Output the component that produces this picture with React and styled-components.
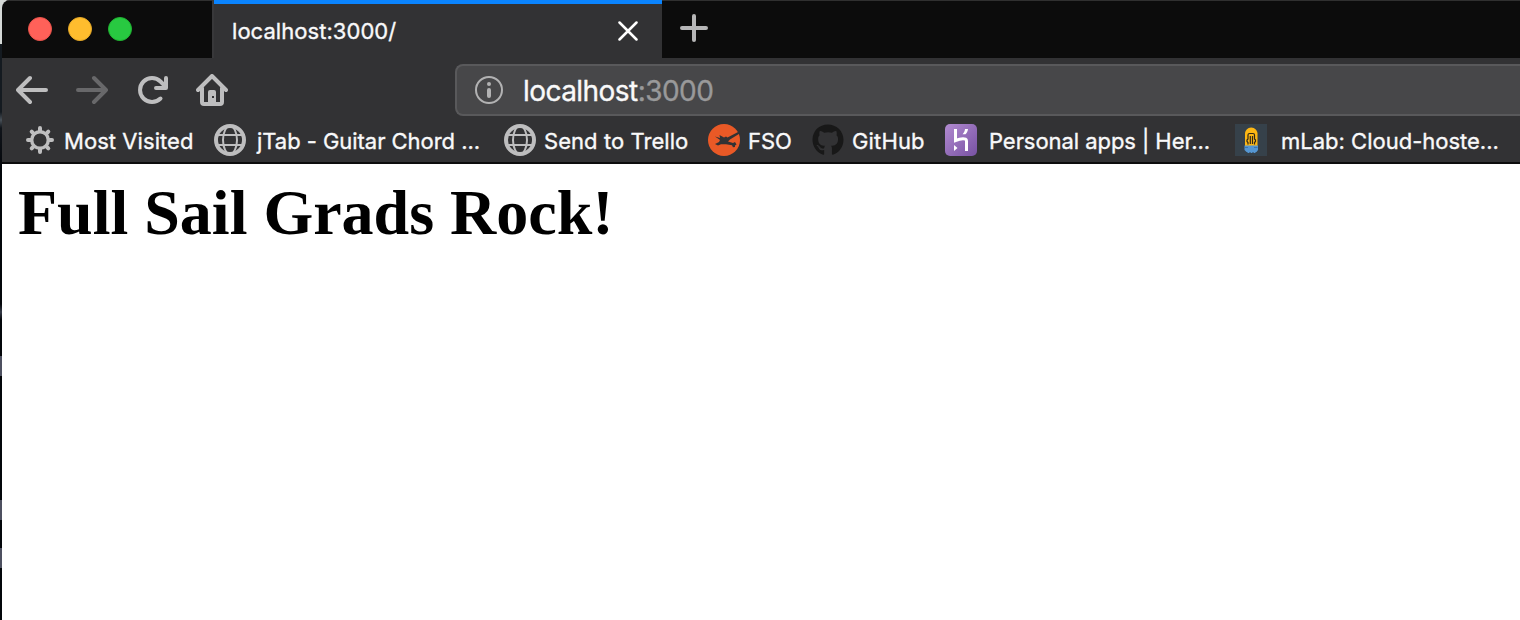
import React from "react";
import styled, { createGlobalStyle } from "styled-components";
import { FaGithub } from "react-icons/fa";

const GlobalStyle = createGlobalStyle`
  * { box-sizing: border-box; }
  body {
    margin: 0;
    overflow: hidden;
    background: #fff;
    font-family: Inter, "Liberation Sans", sans-serif;
  }
`;

const Desktop = styled.div`
  display: flex;
  height: 620px;
  width: 1520px;
  overflow: hidden;
  padding-left: 2px;
  background:
    linear-gradient(#4d5060, #4d5060) 0 356px / 2px 20px no-repeat,
    linear-gradient(#4d5060, #4d5060) 0 500px / 2px 20px no-repeat,
    linear-gradient(#4d5060, #4d5060) 0 548px / 2px 20px no-repeat,
    linear-gradient(#d5d9d7 0 44px, #141a20 44px 112px, #485058 120px, #10141a 128px, #03060a 170px, #03060a 304px, #353b48 312px, #03060a 320px);
`;

const Window = styled.main`
  display: flex;
  flex-direction: column;
  flex: 1;
  min-width: 0;
  border-top-left-radius: 8px;
  background: #fff;
  overflow: hidden;
`;

const TitleBar = styled.header`
  display: flex;
  height: 58px;
  background: #0c0c0c;
  box-shadow: inset 0 1px #303030;
`;

const Lights = styled.div`
  display: flex;
  gap: 16px;
  width: 212px;
  padding: 17px 0 0 26px;
  border-right: 2px solid #38383a;
`;

const Light = styled.span`
  width: 24px;
  height: 24px;
  border-radius: 50%;
  background: ${(p) => p.$fill};
  border: 1px solid ${(p) => p.$edge};
`;

const Tab = styled.div`
  display: flex;
  align-items: center;
  justify-content: space-between;
  width: 448px;
  padding: 0 24px 0 18px;
  border-top: 4px solid #0a84ff;
  background: #323234;
`;

const Label = styled.span`
  display: block;
  width: ${(p) => p.$width}px;
  flex: none;
  white-space: nowrap;
  font-size: ${(p) => p.$size || 22}px;
  line-height: 28px;
  letter-spacing: ${(p) => p.$track || 0}px;
  -webkit-text-stroke: 0.35px currentColor;
  color: #f9f9fa;
`;

const NewTab = styled.div`
  padding: 14px 0 0 18px;
`;

const Icon = styled.svg`
  display: block;
  flex: none;
  fill: none;
  stroke: ${(p) => p.$color || "#bebebf"};
  stroke-linecap: round;
  stroke-linejoin: round;
`;

const NavBar = styled.nav`
  display: flex;
  height: 58px;
  padding: 6px 0 0 14px;
  background: #323234;
`;

const NavButtons = styled.div`
  display: flex;
  gap: 28px;
  width: 439px;
  padding-top: 10px;
`;

const AddressBar = styled.div`
  display: flex;
  flex: 1;
  height: 52px;
  padding: 10px 0 0 18px;
  border: 2px solid #59595b;
  border-right: 0;
  border-radius: 8px 0 0 8px;
  background: #474749;
`;

const Address = styled(Label)`
  margin: 0 0 0 20px;
  line-height: 30px;
`;

const Port = styled.span`
  color: #99999a;
`;

const BookmarkBar = styled.div`
  display: flex;
  height: 48px;
  padding: 8px 0 0 22px;
  border-bottom: 2px solid #0c0c0d;
  background: #323234;
`;

const Bookmark = styled.div`
  display: flex;
  flex: none;
  gap: ${(p) => p.$gap || 8}px;
  width: ${(p) => p.$width}px;
`;

const BookmarkLabel = styled(Label)`
  margin-top: 3px;
`;

const GithubMark = styled(FaGithub)`
  flex: none;
  color: #181818;
`;

const Page = styled.section`
  flex: 1;
  padding: 12px 16px;
`;

const Heading = styled.h1`
  margin: 0;
  font: bold 64px/74px "Liberation Serif", serif;
  color: #000;
`;

const Globe = () => (
  <Icon width="32" height="32" viewBox="0 0 32 32" strokeWidth="2">
    <circle cx="16" cy="16" r="14" strokeWidth="4" />
    <ellipse cx="16" cy="16" rx="7" ry="14" />
    <path d="M4 11h24M4 21h24" />
  </Icon>
);

const Gear = () => (
  <Icon width="32" height="32" viewBox="0 0 32 32">
    <circle cx="16" cy="16" r="8.3" strokeWidth="3.4" />
    <path
      strokeWidth="4"
      d="M16 4v3M16 25v3M4 16h3M25 16h3M7.700 7.700l1.700 1.700M22.600 22.600l1.700 1.700M7.700 24.300l1.700-1.700M22.600 9.400l1.700-1.700"
    />
  </Icon>
);

const Plane = () => (
  <Icon width="32" height="32" viewBox="0 0 32 32" $color="none">
    <circle cx="16" cy="16" r="16" fill="#e95926" />
    <path
      fill="#323234"
      d="M7 12.500L12 14l-.5-3 4.500 2.500 2-1 1.500 1L31 7.500l.7 2L22 15.500 20 17.500l5 1.500 2-1 1.500 2.500-1.500 1 0 1.500-2 .3-1-2-6-1-5 0-3 1.200-3-1.500 4-2 1-2z"
    />
  </Icon>
);

const Heroku = () => (
  <Icon width="32" height="32" viewBox="0 0 32 32" $color="none">
    <defs>
      <linearGradient id="violet" x1="0" y1="0" x2="1" y2="1">
        <stop offset="0" stopColor="#b18ad0" />
        <stop offset="1" stopColor="#7852a3" />
      </linearGradient>
    </defs>
    <rect width="32" height="32" rx="5" fill="url(#violet)" />
    <path
      d="M10.500 5v11.500c5-2 11-3 11 .5v10"
      stroke="#fff"
      strokeWidth="3"
      strokeLinecap="butt"
      strokeLinejoin="miter"
    />
    <path d="M9 21l3.500 3L9 27zM20 5h3c-.2 2-1.200 4-2.500 5.300h-3C19 8.700 19.800 7 20 5z" fill="#fff" />
  </Icon>
);

const Mlab = () => (
  <Icon width="32" height="32" viewBox="0 0 32 32" $color="none">
    <path fill="#36414a" d="M0 0h32v32H0z" />
    <path fill="#fdb714" d="M10 22V9.500C10 7 12.500 3.500 16.200 3.500S22.500 7 22.500 9.500V22z" />
    <path fill="#5596d2" d="M9.500 21.500h13.500v4.500l-1.500 2h-1v1h-2v-1h-1v1h-2v-1h-1v1h-2v-1h-1l-2-2z" />
    <path fill="#3d75ad" d="M10 23h3v1h-3zM19 23h3.500v1H19z" />
    <path
      d="M13 20.500v-2l-1-1v-1.500l1-1v-4q0-1.500 1.500-1.500h3.500q1.500 0 1.500 1.500v4l1 1v1.500l-1 1v2M15.300 12v8M17.500 12v8"
      stroke="#302718"
      strokeWidth="1.200"
      strokeLinecap="butt"
    />
  </Icon>
);

const bookmarks = [
  { icon: <Gear />, text: "Most Visited", width: 190, label: 132, track: 0.06 },
  { icon: <Globe />, text: "jTab - Guitar Chord ...", width: 290, label: 226, gap: 11, track: -0.04 },
  { icon: <Globe />, text: "Send to Trello", width: 204, label: 146, track: 0.06 },
  { icon: <Plane />, text: "FSO", width: 104, label: 46, track: 0 },
  { icon: <GithubMark size={32} />, text: "GitHub", width: 133, label: 75, track: 0.15 },
  { icon: <Heroku />, text: "Personal apps | Her...", width: 290, label: 222, gap: 12, track: -0.06 },
  { icon: <Mlab />, text: "mLab: Cloud-hoste...", width: 285, label: 222, gap: 14, track: 0 },
];

export default function App() {
  return (
    <>
      <GlobalStyle />
      <Desktop>
        <Window>
          <TitleBar>
            <Lights>
              <Light $fill="#ff6159" $edge="#e9524a" />
              <Light $fill="#ffbd2e" $edge="#e5a827" />
              <Light $fill="#28c941" $edge="#1fb431" />
            </Lights>
            <Tab>
              <Label $width={166} $track={0.05}>localhost:3000/</Label>
              <Icon width="20" height="20" viewBox="0 0 20 20" $color="#fff" strokeWidth="2.500">
                <path d="M1.500 1.500l17 17M18.500 1.500l-17 17" />
              </Icon>
            </Tab>
            <NewTab>
              <Icon width="28" height="28" viewBox="0 0 28 28" strokeWidth="4" $color="#b6b6b7">
                <path d="M14 2v24M2 14h24" />
              </Icon>
            </NewTab>
          </TitleBar>
          <NavBar>
            <NavButtons>
              <Icon width="32" height="32" viewBox="0 0 32 32" strokeWidth="4">
                <path d="M2 16h28M14 4L2 16l12 12" />
              </Icon>
              <Icon width="32" height="32" viewBox="0 0 32 32" strokeWidth="4" $color="#68686a">
                <path d="M2 16h28M18 4l12 12-12 12" />
              </Icon>
              <Icon width="32" height="32" viewBox="0 0 32 32" strokeWidth="4">
                <path d="M24.500 24.500A12 12 0 1 1 24.500 7.500L29 12" />
                <path d="M30 4v10H20" />
              </Icon>
              <Icon width="32" height="32" viewBox="0 0 32 32" strokeWidth="4">
                <path d="M2 16L16 2l14 14M6 14v14q0 2 2 2h16q2 0 2-2V14" />
                <path
                  d="M12 30V18q0-2 2-2h4q2 0 2 2v12z"
                  fill="#bebebf"
                  stroke="none"
                />
                <path d="M16 22h2v2h-2z" fill="#323234" stroke="none" />
              </Icon>
            </NavButtons>
            <AddressBar>
              <Icon width="28" height="28" viewBox="0 0 28 28" $color="#b2b2b3" strokeWidth="2">
                <circle cx="14" cy="14" r="13" />
                <path d="M14 14v6" strokeWidth="4" />
                <circle cx="14" cy="8" r="2" fill="#b2b2b3" stroke="none" />
              </Icon>
              <Address $size={28} $width={192} $track={-0.55}>
                localhost<Port>:3000</Port>
              </Address>
            </AddressBar>
          </NavBar>
          <BookmarkBar>
            {bookmarks.map((b) => (
              <Bookmark key={b.text} $gap={b.gap} $width={b.width}>
                {b.icon}
                <BookmarkLabel $width={b.label} $track={b.track}>
                  {b.text}
                </BookmarkLabel>
              </Bookmark>
            ))}
          </BookmarkBar>
          <Page>
            <Heading>Full Sail Grads Rock!</Heading>
          </Page>
        </Window>
      </Desktop>
    </>
  );
}
